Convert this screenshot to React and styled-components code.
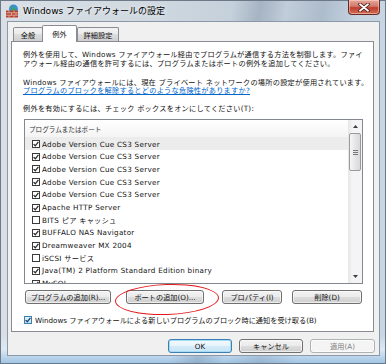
import styled, { createGlobalStyle } from "styled-components";

const GlobalStyle = createGlobalStyle`
  body {
    margin: 0;
    background: #fff;
  }
  * {
    box-sizing: border-box;
  }
`;

const items = [
  { name: "Adobe Version Cue CS3 Server", on: true, selected: true },
  { name: "Adobe Version Cue CS3 Server", on: true },
  { name: "Adobe Version Cue CS3 Server", on: true },
  { name: "Adobe Version Cue CS3 Server", on: true },
  { name: "Adobe Version Cue CS3 Server", on: true },
  { name: "Apache HTTP Server", on: true },
  { name: "BITS ピア キャッシュ", on: false },
  { name: "BUFFALO NAS Navigator", on: true },
  { name: "Dreamweaver MX 2004", on: true },
  { name: "iSCSI サービス", on: false },
  { name: "Java(TM) 2 Platform Standard Edition binary", on: true },
  { name: "MySQL", on: true },
];

function FirewallIcon() {
  return (
    <svg width="14" height="14" viewBox="0 0 14 14">
      <circle cx="8.5" cy="5" r="4.5" fill="#3a8fd8" />
      <path d="M6 2.5c1 .3 1.6 1 1.3 2-.4 1 .8 1.3 1.6 1 .6-.3 1.4.2 1.6 1" fill="none" stroke="#3faa3a" strokeWidth="1.6" />
      <rect x="1" y="6.5" width="12" height="7" fill="#b5402f" />
      <path d="M1 8.8h12M1 11.2h12M4 6.5v2.3M9 6.5v2.3M6.5 8.8v2.4M11 8.8v2.4M4 11.2v2.3M9 11.2v2.3" stroke="#e9c9b8" strokeWidth="0.7" />
    </svg>
  );
}

function Check({ on, focus }) {
  return (
    <CheckBox $focus={focus}>
      {on && (
        <svg width="6" height="6" viewBox="0 0 6 6">
          <path d="M0.6 3.1 L2.3 4.8 L5.4 0.9" fill="none" stroke={focus ? "#1e3f66" : "#2a2a2a"} strokeWidth="1.3" />
        </svg>
      )}
    </CheckBox>
  );
}

export default function App() {
  return (
    <>
      <GlobalStyle />
      <Window>
        <TitleBar>
          <FirewallIcon />
          <TitleText>Windows ファイアウォールの設定</TitleText>
          <CloseButton>
            <svg width="12" height="9" viewBox="0 0 12 9">
              <path d="M2 1.2 L10 7.8 M10 1.2 L2 7.8" stroke="#4a1a16" strokeWidth="3.4" strokeLinecap="round" />
              <path d="M2 1.2 L10 7.8 M10 1.2 L2 7.8" stroke="#fff" strokeWidth="1.8" strokeLinecap="round" />
            </svg>
          </CloseButton>
        </TitleBar>

        <Client>
          <TabRow>
            <Tab $w={30}>全般</Tab>
            <Tab $w={35} $active>
              例外
            </Tab>
            <Tab $w={42}>詳細設定</Tab>
          </TabRow>

          <Panel>
            <Text>
              例外を使用して、Windows ファイアウォール経由でプログラムが通信する方法を制御します。ファイ
              <br />
              アウォール経由の通信を許可するには、プログラムまたはポートの例外を追加してください。
            </Text>
            <Text $gap={10.5}>
              Windows ファイアウォールには、現在 プライベート ネットワークの場所の設定が使用されています。
              <br />
              <Link>プログラムのブロックを解除するとどのような危険性がありますか?</Link>
            </Text>
            <Text $gap={8.8}>例外を有効にするには、チェック ボックスをオンにしてください(T):</Text>

            <ListBox>
              <ListMain>
                <ListHeader>プログラムまたはポート</ListHeader>
                {items.map((it, i) => (
                  <Row key={i} $selected={it.selected}>
                    <Check on={it.on} />
                    <span>{it.name}</span>
                  </Row>
                ))}
              </ListMain>
              <ScrollBar>
                <ScrollArrow>
                  <svg width="5" height="3" viewBox="0 0 5 3">
                    <path d="M0 3 L2.5 0 L5 3 Z" fill="#3d3d3d" />
                  </svg>
                </ScrollArrow>
                <Thumb>
                  <Grip />
                  <Grip />
                  <Grip />
                </Thumb>
                <Track />
                <ScrollArrow>
                  <svg width="5" height="3" viewBox="0 0 5 3">
                    <path d="M0 0 L2.5 3 L5 0 Z" fill="#3d3d3d" />
                  </svg>
                </ScrollArrow>
              </ScrollBar>
            </ListBox>

            <ButtonRow>
              <Button $w={86}>プログラムの追加(R)...</Button>
              <Button $w={78} $gap={15}>
                ポートの追加(O)...
              </Button>
              <Button $w={60} $gap={18}>
                プロパティ(I)
              </Button>
              <Button $w={70} $gap={10}>
                削除(D)
              </Button>
            </ButtonRow>

            <NotifyRow>
              <Check on focus />
              <span>Windows ファイアウォールによる新しいプログラムのブロック時に通知を受け取る(B)</span>
            </NotifyRow>
          </Panel>

          <Footer>
            <Button $w={64} $default>
              OK
            </Button>
            <Button $w={64}>キャンセル</Button>
            <Button $w={65} $disabled>
              適用(A)
            </Button>
          </Footer>
        </Client>

        <Circle />
      </Window>
    </>
  );
}

const Window = styled.div`
  position: relative;
  width: 386px;
  height: 364px;
  display: flex;
  flex-direction: column;
  padding-bottom: 8px;
  overflow: hidden;
  font-family: "DejaVu Sans", "Noto Sans CJK JP", sans-serif;
  font-size: 7.2px;
  color: #111;
  background: linear-gradient(
      100deg,
      transparent 52%,
      rgba(95, 115, 140, 0.28) 58%,
      transparent 64%,
      rgba(95, 115, 140, 0.22) 72%,
      transparent 80%
    ),
    linear-gradient(180deg, transparent 92%, #dce8f3 96%, #9cc3e4 100%),
    linear-gradient(90deg, #d9dfe5, #cfd8e0 40%, #bfccd8 70%, #c8d6e4);
  box-shadow: inset 0 0 0 1px #6d7986;
`;

const TitleBar = styled.div`
  height: 21px;
  flex-shrink: 0;
  display: flex;
  align-items: center;
  gap: 4px;
  padding: 0 6px 0 5px;
`;

const TitleText = styled.span`
  font-size: 9px;
  color: #000;
  text-shadow: 0 0 5px rgba(255, 255, 255, 0.95);
`;

const CloseButton = styled.div`
  margin-left: auto;
  align-self: flex-start;
  width: 32px;
  height: 15px;
  display: flex;
  align-items: center;
  justify-content: center;
  border: 1px solid #6a2a24;
  border-top: none;
  border-radius: 0 0 4px 4px;
  background: linear-gradient(#e6a99c, #d0786a 45%, #bd3f30 55%, #d36e55);
  box-shadow: inset 0 0 0 1px rgba(255, 220, 210, 0.5);
`;

const Client = styled.div`
  flex: 1;
  min-height: 0;
  margin: 0 6px 0 7px;
  display: flex;
  flex-direction: column;
  padding: 3px 5px 0 3px;
  border: 1px solid #8a98a8;
  background: #f0f0f0;
`;

const TabRow = styled.div`
  position: relative;
  z-index: 1;
  height: 17px;
  flex-shrink: 0;
  margin-bottom: -1px;
  display: flex;
  align-items: flex-end;
  padding-left: 2px;
`;

const Tab = styled.div`
  width: ${(p) => p.$w}px;
  height: ${(p) => (p.$active ? 17 : 14)}px;
  margin: ${(p) => (p.$active ? "0 0 0 -1px" : "0 0 1px")};
  display: flex;
  align-items: center;
  justify-content: center;
  padding-top: ${(p) => (p.$active ? 0 : 1)}px;
  border: 1px solid #898c95;
  border-bottom: none;
  border-radius: 2px 2px 0 0;
  background: ${(p) =>
    p.$active ? "#fff" : "linear-gradient(#f2f2f2, #ebebeb 50%, #dddddd 50%, #cfcfcf)"};
`;

const Panel = styled.div`
  flex: 1;
  min-height: 0;
  display: flex;
  flex-direction: column;
  padding: 9px 10px 0 11px;
  border: 1px solid #898c95;
  background: #fff;
`;

const Text = styled.p`
  margin: ${(p) => p.$gap || 0}px 0 0;
  line-height: 8.6px;
  letter-spacing: 0.25px;
  white-space: nowrap;
`;

const Link = styled.span`
  color: #0066cc;
  text-decoration: underline;
`;

const ListBox = styled.div`
  height: 165px;
  flex-shrink: 0;
  margin: 6px 0 0 1px;
  display: flex;
  border: 1px solid #828790;
  background: #fff;
`;

const ListMain = styled.div`
  flex: 1;
  overflow: hidden;
  display: flex;
  flex-direction: column;
`;

const ListHeader = styled.div`
  height: 17.5px;
  flex-shrink: 0;
  display: flex;
  align-items: center;
  padding-left: 4px;
  font-size: 6.6px;
  color: #333;
  background: linear-gradient(#ffffff, #f4f4f4);
  border-bottom: 1px solid #ececec;
`;

const Row = styled.div`
  height: 12.7px;
  flex-shrink: 0;
  display: flex;
  align-items: center;
  gap: 2px;
  padding-left: 7px;
  letter-spacing: 0.28px;
  white-space: nowrap;
  background: ${(p) => (p.$selected ? "#ececec" : "transparent")};
`;

const CheckBox = styled.span`
  width: 8px;
  height: 8px;
  flex-shrink: 0;
  display: flex;
  align-items: center;
  justify-content: center;
  border: 1px solid ${(p) => (p.$focus ? "#3c7fb1" : "#3a3a3a")};
  background: ${(p) => (p.$focus ? "linear-gradient(#e3f3fc, #bfe3f8)" : "#fff")};
`;

const ScrollBar = styled.div`
  width: 14px;
  display: flex;
  flex-direction: column;
  background: linear-gradient(90deg, #e6e6e6, #f4f4f4 30%, #f4f4f4);
`;

const ScrollArrow = styled.div`
  height: 13px;
  display: flex;
  align-items: center;
  justify-content: center;
`;

const Thumb = styled.div`
  height: 38px;
  margin: 0 1px;
  display: flex;
  flex-direction: column;
  align-items: center;
  justify-content: center;
  gap: 1px;
  border: 1px solid #999;
  border-radius: 2px;
  background: linear-gradient(90deg, #f6f6f6, #e6e6e6 50%, #d8d8d8);
`;

const Grip = styled.span`
  width: 5px;
  height: 1px;
  background: #777;
`;

const Track = styled.div`
  flex: 1;
`;

const ButtonRow = styled.div`
  display: flex;
  flex-shrink: 0;
  margin: 5.5px 0 0 2px;
`;

const Button = styled.div`
  width: ${(p) => p.$w}px;
  height: 14px;
  flex-shrink: 0;
  margin-left: ${(p) => p.$gap || 0}px;
  display: flex;
  align-items: center;
  justify-content: center;
  white-space: nowrap;
  border: 1px solid ${(p) => (p.$default ? "#3c7fb1" : p.$disabled ? "#adb2b5" : "#707070")};
  border-radius: 3px;
  color: ${(p) => (p.$disabled ? "#838383" : "#111")};
  background: ${(p) =>
    p.$disabled
      ? "#f4f4f4"
      : p.$default
      ? "linear-gradient(#f3f9fd, #e6f3fb 50%, #d4ebf8 50%, #c9e5f7)"
      : "linear-gradient(#f2f2f2, #ebebeb 50%, #dddddd 50%, #cfcfcf)"};
  box-shadow: ${(p) =>
    p.$default ? "inset 0 0 0 1px #a6dbf6" : "inset 0 0 0 1px rgba(255,255,255,0.6)"};
`;

const NotifyRow = styled.div`
  display: flex;
  flex-shrink: 0;
  align-items: center;
  gap: 3px;
  margin-top: 11px;
  padding-left: 1px;
  white-space: nowrap;
`;

const Footer = styled.div`
  height: 23px;
  flex-shrink: 0;
  display: flex;
  justify-content: flex-end;
  gap: 7px;
  padding-top: 7px;
  margin-right: -1px;
`;

const Circle = styled.div`
  position: absolute;
  left: 115px;
  top: 284px;
  width: 104px;
  height: 31px;
  border: 1.5px solid #e3161b;
  border-radius: 50%;
  transform: rotate(-2deg);
`;
